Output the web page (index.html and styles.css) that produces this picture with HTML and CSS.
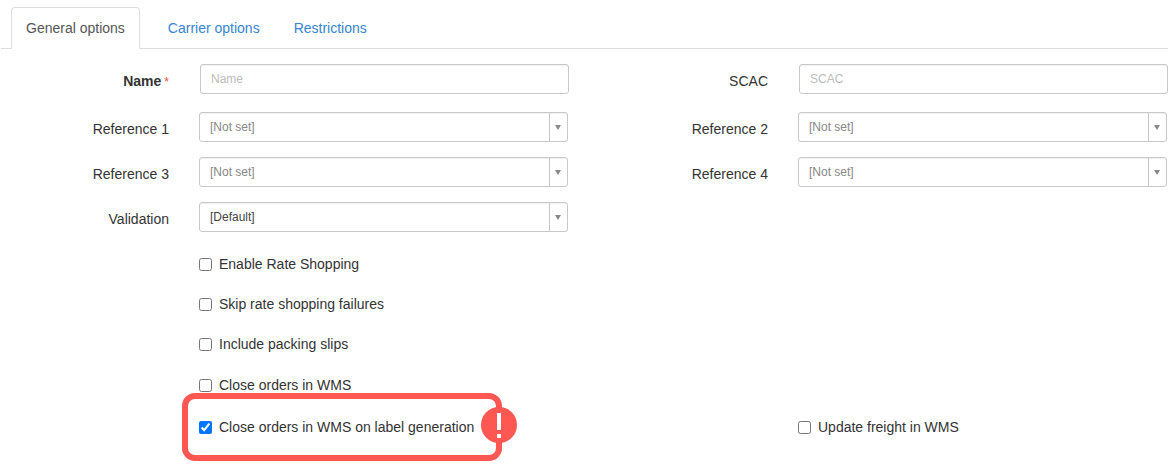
FILE: index.html
```html
<!DOCTYPE html>
<html lang="en">
<head>
<meta charset="utf-8">
<meta name="viewport" content="width=device-width, initial-scale=1">
<title>General options</title>
<link rel="stylesheet" href="styles.css">
</head>
<body>
<nav class="tabs">
  <a class="tab tab-active" href="#general" aria-current="page">General options</a>
  <a class="tab" href="#carrier">Carrier options</a>
  <a class="tab" href="#restrictions">Restrictions</a>
</nav>
<form class="form" id="general">
  <div class="fields">
    <div class="row row-text">
      <div class="field">
        <label class="label label-required" for="name">Name<span class="star">*</span></label>
        <input class="control text" id="name" type="text" placeholder="Name" required>
      </div>
      <div class="field">
        <label class="label" for="scac">SCAC</label>
        <input class="control text" id="scac" type="text" placeholder="SCAC">
      </div>
    </div>
    <div class="row">
      <div class="field">
        <label class="label" for="ref1">Reference 1</label>
        <div class="picker">
          <select class="control select unset" id="ref1"><option>[Not set]</option></select>
          <span class="arrow"><svg width="6" height="5" viewBox="0 0 6 5"><path d="M0 0h6L3 5z"/></svg></span>
        </div>
      </div>
      <div class="field">
        <label class="label" for="ref2">Reference 2</label>
        <div class="picker">
          <select class="control select unset" id="ref2"><option>[Not set]</option></select>
          <span class="arrow"><svg width="6" height="5" viewBox="0 0 6 5"><path d="M0 0h6L3 5z"/></svg></span>
        </div>
      </div>
    </div>
    <div class="row">
      <div class="field">
        <label class="label" for="ref3">Reference 3</label>
        <div class="picker">
          <select class="control select unset" id="ref3"><option>[Not set]</option></select>
          <span class="arrow"><svg width="6" height="5" viewBox="0 0 6 5"><path d="M0 0h6L3 5z"/></svg></span>
        </div>
      </div>
      <div class="field">
        <label class="label" for="ref4">Reference 4</label>
        <div class="picker">
          <select class="control select unset" id="ref4"><option>[Not set]</option></select>
          <span class="arrow"><svg width="6" height="5" viewBox="0 0 6 5"><path d="M0 0h6L3 5z"/></svg></span>
        </div>
      </div>
    </div>
    <div class="row">
      <div class="field">
        <label class="label" for="validation">Validation</label>
        <div class="picker">
          <select class="control select" id="validation"><option>[Default]</option></select>
          <span class="arrow"><svg width="6" height="5" viewBox="0 0 6 5"><path d="M0 0h6L3 5z"/></svg></span>
        </div>
      </div>
    </div>
  </div>
  <div class="checks">
    <div class="row"><label class="check"><input class="box" type="checkbox">Enable Rate Shopping</label></div>
    <div class="row"><label class="check"><input class="box" type="checkbox">Skip rate shopping failures</label></div>
    <div class="row"><label class="check"><input class="box" type="checkbox">Include packing slips</label></div>
  </div>
  <div class="checks checks-wms">
    <div class="row"><label class="check"><input class="box" type="checkbox">Close orders in WMS</label></div>
    <div class="row">
      <div class="check-cell">
        <label class="check-marked"><input class="box" type="checkbox" checked>Close orders in WMS on label generation
          <span class="highlight">
            <svg class="alert" width="36" height="36" viewBox="0 0 36 36" aria-hidden="true">
              <circle cx="18" cy="18" r="18" fill="#ff5751"/>
              <path d="M16 6h4v17h-4zM16 27h4v4h-4z" fill="#fff"/>
            </svg>
          </span>
        </label>
      </div>
      <label class="check"><input class="box" type="checkbox">Update freight in WMS</label>
    </div>
  </div>
</form>
</body>
</html>
```
FILE: styles.css
```css
* {
  box-sizing: border-box;
}

body {
  margin: 0;
  padding: 7px 8px 33px 0;
  background: #fff;
  color: #333;
  font: 14px/20px "Liberation Sans", Arial, sans-serif;
}

.tabs {
  display: flex;
  gap: 2px;
  margin-left: 1px;
  padding-left: 10px;
  border-bottom: 1px solid #ddd;
}

.tab {
  margin-bottom: -1px;
  padding: 10px 15px;
  border: 1px solid transparent;
  border-radius: 4px 4px 0 0;
  color: #3585d0;
  text-decoration: none;
}

.tab-active {
  margin-right: 10px;
  padding: 10px 14px;
  border-color: #ddd #ddd #fff;
  background: #fff;
  color: #555;
}

.form {
  padding-top: 15px;
}

.fields {
  display: flex;
  flex-direction: column;
  gap: 15px;
}

.row {
  display: grid;
  grid-template-columns: 1fr 1fr;
  gap: 30px;
}

.row-text {
  margin-bottom: 3px;
}

.field {
  display: grid;
  grid-template-columns: 169px 1fr;
  gap: 30px;
}

.label {
  padding-top: 7px;
  text-align: right;
}

.label-required {
  font-weight: bold;
}

.star {
  margin-left: 3px;
  color: #e8493f;
  font-size: 12px;
  font-weight: normal;
}

.control {
  width: 100%;
  height: 30px;
  border: 1px solid #c8c8c8;
  border-radius: 3px;
  background: #fff;
  font: 12px/18px "Liberation Sans", Arial, sans-serif;
  color: #444;
}

.text {
  width: auto;
  margin-left: 1px;
  padding: 4px 10px 5px;
  box-shadow: inset 0 1px 1px rgba(0, 0, 0, 0.06);
}

.text::placeholder {
  color: #bbb;
}

.picker {
  position: relative;
  margin-right: 1px;
}

.select {
  display: block;
  appearance: none;
  padding: 5px 28px 5px 10px;
  box-shadow: inset 0 1px 1px rgba(0, 0, 0, 0.06);
}

.unset {
  color: #888;
}

.arrow {
  position: absolute;
  inset: 1px 1px 1px auto;
  display: flex;
  align-items: center;
  justify-content: center;
  width: 18px;
  padding-right: 1px;
  border-left: 1px solid #c8c8c8;
  fill: #888;
  pointer-events: none;
}

.checks {
  display: flex;
  flex-direction: column;
  gap: 20px;
  margin-top: 22px;
}

.checks-wms {
  gap: 22px;
  margin-top: 21px;
}

.check,
.check-cell {
  padding-left: 199px;
}

.check,
.check-marked {
  display: flex;
  align-items: center;
  gap: 7px;
}

.check-marked {
  position: relative;
  width: fit-content;
}

.box {
  width: 13px;
  height: 13px;
  margin: 0;
}

.highlight {
  position: absolute;
  inset: -24px -28px -24px -17px;
  border: 6px solid #ff5751;
  border-radius: 13px;
  pointer-events: none;
}

.alert {
  position: absolute;
  top: 8px;
  right: -21px;
}
```
